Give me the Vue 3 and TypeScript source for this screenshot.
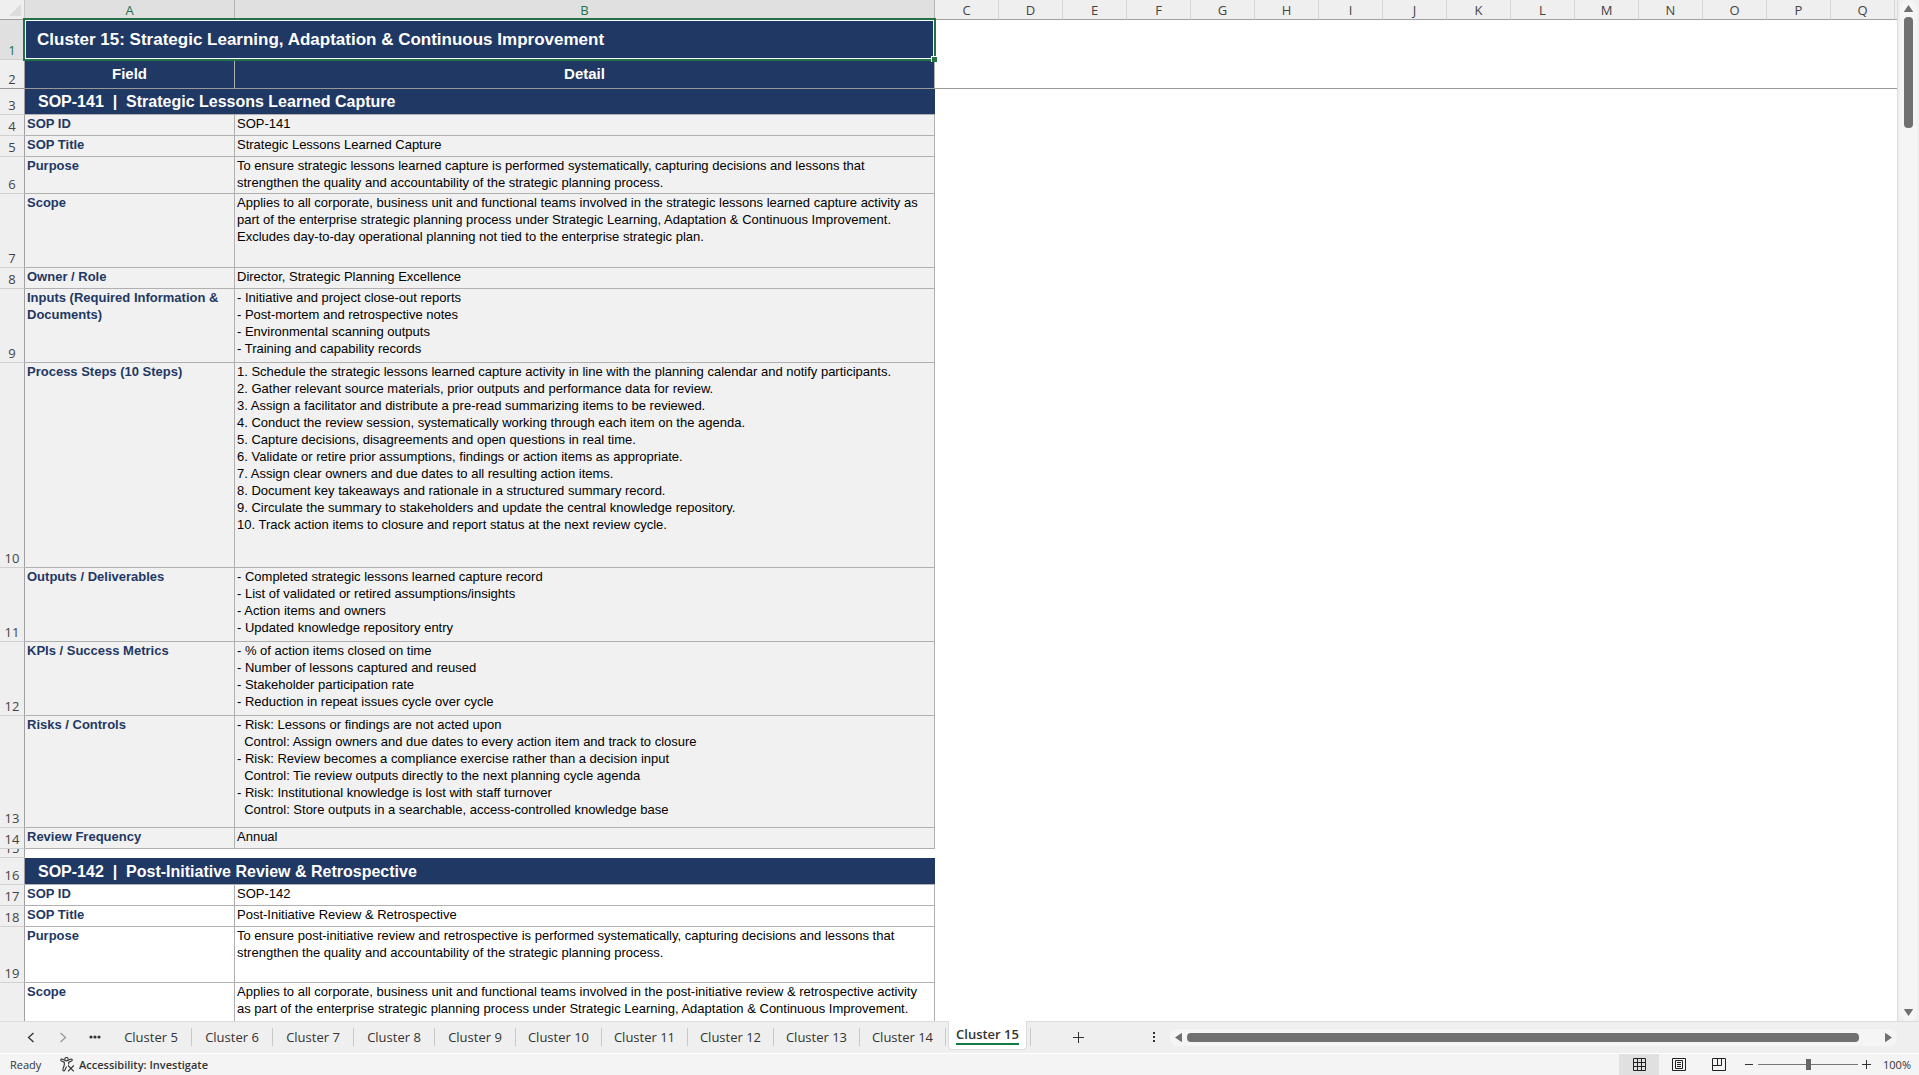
<script setup lang="ts">
interface SheetRow {
  n: number
  h: number
  kind: 'title' | 'head' | 'section' | 'data' | 'blank'
  label?: string
  text?: string
  shaded?: boolean
}

const emptyColumns: string[] = 'CDEFGHIJKLMNOPQ'.split('')

const rows: SheetRow[] = [
  { n: 1, h: 40, kind: 'title', text: 'Cluster 15: Strategic Learning, Adaptation & Continuous Improvement' },
  { n: 2, h: 29, kind: 'head', label: 'Field', text: 'Detail' },
  { n: 3, h: 26, kind: 'section', text: 'SOP-141  |  Strategic Lessons Learned Capture' },
  { n: 4, h: 21, kind: 'data', shaded: true, label: 'SOP ID', text: 'SOP-141' },
  { n: 5, h: 21, kind: 'data', shaded: true, label: 'SOP Title', text: 'Strategic Lessons Learned Capture' },
  {
    n: 6, h: 37, kind: 'data', shaded: true, label: 'Purpose',
    text: 'To ensure strategic lessons learned capture is performed systematically, capturing decisions and lessons that\nstrengthen the quality and accountability of the strategic planning process.',
  },
  {
    n: 7, h: 74, kind: 'data', shaded: true, label: 'Scope',
    text: 'Applies to all corporate, business unit and functional teams involved in the strategic lessons learned capture activity as\npart of the enterprise strategic planning process under Strategic Learning, Adaptation & Continuous Improvement.\nExcludes day-to-day operational planning not tied to the enterprise strategic plan.',
  },
  { n: 8, h: 21, kind: 'data', shaded: true, label: 'Owner / Role', text: 'Director, Strategic Planning Excellence' },
  {
    n: 9, h: 74, kind: 'data', shaded: true, label: 'Inputs (Required Information &\nDocuments)',
    text: '- Initiative and project close-out reports\n- Post-mortem and retrospective notes\n- Environmental scanning outputs\n- Training and capability records',
  },
  {
    n: 10, h: 205, kind: 'data', shaded: true, label: 'Process Steps (10 Steps)',
    text: [
      '1. Schedule the strategic lessons learned capture activity in line with the planning calendar and notify participants.',
      '2. Gather relevant source materials, prior outputs and performance data for review.',
      '3. Assign a facilitator and distribute a pre-read summarizing items to be reviewed.',
      '4. Conduct the review session, systematically working through each item on the agenda.',
      '5. Capture decisions, disagreements and open questions in real time.',
      '6. Validate or retire prior assumptions, findings or action items as appropriate.',
      '7. Assign clear owners and due dates to all resulting action items.',
      '8. Document key takeaways and rationale in a structured summary record.',
      '9. Circulate the summary to stakeholders and update the central knowledge repository.',
      '10. Track action items to closure and report status at the next review cycle.',
    ].join('\n'),
  },
  {
    n: 11, h: 74, kind: 'data', shaded: true, label: 'Outputs / Deliverables',
    text: '- Completed strategic lessons learned capture record\n- List of validated or retired assumptions/insights\n- Action items and owners\n- Updated knowledge repository entry',
  },
  {
    n: 12, h: 74, kind: 'data', shaded: true, label: 'KPIs / Success Metrics',
    text: '- % of action items closed on time\n- Number of lessons captured and reused\n- Stakeholder participation rate\n- Reduction in repeat issues cycle over cycle',
  },
  {
    n: 13, h: 112, kind: 'data', shaded: true, label: 'Risks / Controls',
    text: '- Risk: Lessons or findings are not acted upon\n  Control: Assign owners and due dates to every action item and track to closure\n- Risk: Review becomes a compliance exercise rather than a decision input\n  Control: Tie review outputs directly to the next planning cycle agenda\n- Risk: Institutional knowledge is lost with staff turnover\n  Control: Store outputs in a searchable, access-controlled knowledge base',
  },
  { n: 14, h: 21, kind: 'data', shaded: true, label: 'Review Frequency', text: 'Annual' },
  { n: 15, h: 9, kind: 'blank' },
  { n: 16, h: 27, kind: 'section', text: 'SOP-142  |  Post-Initiative Review & Retrospective' },
  { n: 17, h: 21, kind: 'data', label: 'SOP ID', text: 'SOP-142' },
  { n: 18, h: 21, kind: 'data', label: 'SOP Title', text: 'Post-Initiative Review & Retrospective' },
  {
    n: 19, h: 56, kind: 'data', label: 'Purpose',
    text: 'To ensure post-initiative review and retrospective is performed systematically, capturing decisions and lessons that\nstrengthen the quality and accountability of the strategic planning process.',
  },
  {
    n: 20, h: 74, kind: 'data', label: 'Scope',
    text: 'Applies to all corporate, business unit and functional teams involved in the post-initiative review & retrospective activity\nas part of the enterprise strategic planning process under Strategic Learning, Adaptation & Continuous Improvement.\nExcludes day-to-day operational planning not tied to the enterprise strategic plan.',
  },
]

const tabs: number[] = [5, 6, 7, 8, 9, 10, 11, 12, 13, 14]
</script>

<template>
  <div class="app">
    <main class="workspace">
      <div class="sheet">
        <table>
          <colgroup>
            <col class="c-num"><col class="c-a"><col class="c-b">
            <col v-for="c in emptyColumns" :key="c" class="c-std">
            <col>
          </colgroup>
          <thead>
            <tr>
              <th class="corner" aria-label="Select all"><svg width="12" height="12" viewBox="0 0 12 12"><path d="M12 0V12H0Z" fill="#dcdcdc" /></svg></th>
              <th class="col sel" scope="col">A</th>
              <th class="col sel" scope="col">B</th>
              <th v-for="c in emptyColumns" :key="c" class="col" scope="col">{{ c }}</th>
              <th class="col last"></th>
            </tr>
          </thead>
          <tbody>
            <tr v-for="r in rows" :key="r.n" :class="[r.kind, { shaded: r.shaded }]">
              <th class="num" scope="row"><div :style="{ height: r.h - 1 + 'px' }">{{ r.n }}</div></th>
              <template v-if="r.kind === 'data' || r.kind === 'head'">
                <td class="field">{{ r.label }}</td>
                <td class="detail">{{ r.text }}</td>
              </template>
              <td v-else class="merged" colspan="2">{{ r.text }}<span v-if="r.kind === 'title'" class="selection"><i></i></span></td>
              <td class="empty" colspan="16"></td>
            </tr>
          </tbody>
        </table>
      </div>
      <div class="vscroll">
        <div class="vtrack">
          <button aria-label="Scroll up"><svg width="9" height="7" viewBox="0 0 9 7"><path d="M4.5 0 9 6.500Q9 7 8.500 7H.5Q0 7 0 6.500Z" /></svg></button>
          <div class="vrail"><div class="vthumb"></div></div>
          <button aria-label="Scroll down"><svg width="9" height="7" viewBox="0 0 9 7"><path d="M4.500 7 0 .5Q0 0 .5 0H8.500Q9 0 9 .5Z" /></svg></button>
        </div>
      </div>
    </main>

    <nav class="tabbar">
      <div class="tabnav">
        <button aria-label="Previous sheet"><svg width="8" height="11" viewBox="0 0 8 11"><path d="M6.500 1 1.500 5.500 6.500 10" fill="none" stroke="#333" stroke-width="1.300" /></svg></button>
        <button aria-label="Next sheet"><svg width="8" height="11" viewBox="0 0 8 11"><path d="M1.500 1 6.500 5.500 1.500 10" fill="none" stroke="#9a9a9a" stroke-width="1.300" /></svg></button>
        <button aria-label="More sheets"><svg width="12" height="4" viewBox="0 0 12 4"><g fill="#333"><circle cx="2" cy="2" r="1.600" /><circle cx="6" cy="2" r="1.600" /><circle cx="10" cy="2" r="1.600" /></g></svg></button>
      </div>
      <button v-for="t in tabs" :key="t" class="tab" :class="{ wide: t > 9 }">Cluster {{ t }}</button>
      <button class="tab active"><span>Cluster 15</span></button>
      <div class="sep"></div>
      <button class="add" aria-label="New sheet"><svg width="11" height="11" viewBox="0 0 11 11"><path d="M5.500 0V11M0 5.500H11" stroke="#333" /></svg></button>
      <button class="dots" aria-label="Resize tab area"><svg width="2" height="10" viewBox="0 0 2 10"><path d="M0 0H2V2H0ZM0 4H2V6H0ZM0 8H2V10H0Z" fill="#333" /></svg></button>
      <div class="htrack">
        <button aria-label="Scroll left"><svg width="7" height="9" viewBox="0 0 7 9"><path d="M0 4.500 6.500 0Q7 0 7 .5V8.500Q7 9 6.500 9Z" /></svg></button>
        <div class="hrail"><div class="hthumb"></div></div>
        <button aria-label="Scroll right"><svg width="7" height="9" viewBox="0 0 7 9"><path d="M7 4.500.5 9Q0 9 0 8.500V.5Q0 0 .5 0Z" /></svg></button>
      </div>
    </nav>

    <footer class="status">
      <span class="ready">Ready</span>
      <button class="a11y">
        <svg width="15" height="15" viewBox="0 0 15 15" fill="none" stroke="#333" stroke-width="1.100">
          <circle cx="6.500" cy="2.200" r="1.700" />
          <path d="M4.800 3.200 2 2.100Q.8 1.900.7 3 .7 3.600 1.400 3.900L4.300 5.200V8L2.800 12.600Q2.700 13.900 3.800 14 4.500 14 4.800 13.300L6.500 9.500M8.200 3.200 11 2.100Q12.200 1.900 12.300 3 12.300 3.600 11.600 3.900L8.700 5.200V7.500" />
          <path d="M8 8.500 13.800 14.300M13.800 8.500 8 14.300" />
        </svg>
        <span>Accessibility: Investigate</span>
      </button>
      <div class="views">
        <button class="on" aria-label="Normal view"><svg width="13" height="13" viewBox="0 0 13 13"><path d="M.5 .5H12.500V12.500H.5ZM4.500 0V13M8.500 0V13M0 4.500H13M0 8.500H13" fill="none" stroke="#222" /></svg></button>
        <button aria-label="Page layout view"><svg width="14" height="13" viewBox="0 0 14 13"><path d="M.5 .5H13.500V12.500H.5ZM3.500 2.500H10.500V10.500H3.500ZM5 4.500H9M5 6.500H9M5 8.500H9" fill="none" stroke="#222" /></svg></button>
        <button aria-label="Page break preview"><svg width="14" height="13" viewBox="0 0 14 13"><path d="M.5 .5H13.500V12.500H.5ZM.5 7.500H9.500V.5M5.500 .5V7.500" fill="none" stroke="#222" /></svg></button>
      </div>
      <div class="zoom">
        <button aria-label="Zoom out"><svg width="9" height="9" viewBox="0 0 9 9"><path d="M0 4.500H8" stroke="#333" /></svg></button>
        <input type="range" min="0" max="100" value="50" aria-label="Zoom">
        <button aria-label="Zoom in"><svg width="9" height="9" viewBox="0 0 9 9"><path d="M0 4.500H9M4.500 0V9" stroke="#333" /></svg></button>
      </div>
      <button class="pct">100%</button>
    </footer>
  </div>
</template>

<style>
body {
  overflow: hidden;
  background: #efefef;
}
</style>

<style scoped>
.app {
  display: flex;
  flex-direction: column;
  height: 100vh;
  font-family: "Open Sans", "Noto Sans", sans-serif;
  color: #333;
}
button {
  display: flex;
  align-items: center;
  justify-content: center;
  padding: 0;
  border: 0;
  background: none;
  font: inherit;
  color: inherit;
}
svg {
  display: block;
  flex: none;
}

/* Grid */
.workspace {
  flex: 1;
  display: flex;
  min-height: 0;
}
.sheet {
  flex: 1;
  min-width: 0;
  overflow: hidden;
  background: #fff;
  border-right: 1px solid #dcdcdc;
}
table {
  width: 100%;
  table-layout: fixed;
  border-collapse: separate;
  border-spacing: 0;
}
.c-num { width: 25px; }
.c-a { width: 210px; }
.c-b { width: 700px; }
.c-std { width: 64px; }
th, td {
  box-sizing: border-box;
  padding: 0;
}
thead th {
  height: 20px;
  background: #efefef;
  border-bottom: 1px solid #a0a0a0;
}
.col {
  padding-top: 1px;
  border-right: 1px solid #d4d4d4;
  font-size: 13px;
  line-height: 18px;
  font-weight: 400;
  color: #444;
}
.col.sel {
  background: #e0e0e0;
  border-right-color: #b4b4b4;
  color: #217346;
}
.col.last { border-right: 0; }
.corner {
  border-right: 1px solid #c8c8c8;
}
.corner svg { margin: 1px 0 0 9px; }
.num {
  background: #efefef;
  border-right: 1px solid #a0a0a0;
  border-bottom: 1px solid #d0d0d0;
  font-size: 13px;
  font-weight: 400;
  color: #444;
}
.num div {
  display: flex;
  align-items: flex-end;
  justify-content: center;
  overflow: hidden;
  line-height: 18px;
}
.title .num {
  background: #e0e0e0;
  color: #217346;
}
.head .num, .head td, .head .empty { border-bottom: 1px solid #999; }

td {
  font-family: "Liberation Sans", Arial, sans-serif;
  font-size: 13px;
  line-height: 17px;
  white-space: pre;
  vertical-align: top;
}
.field, .detail {
  padding: 0 2px;
  border-right: 1px solid #b0b0b0;
  border-bottom: 1px solid #b0b0b0;
  color: #000;
}
.field {
  font-weight: 700;
  color: #1f3864;
}
.shaded .field, .shaded .detail { background: #f1f1f1; }
.head .field, .head .detail {
  padding-bottom: 2px;
  background: #203864;
  color: #fff;
  font-size: 15px;
  font-weight: 700;
  text-align: center;
  vertical-align: middle;
}
.section .merged, .title .merged {
  background: #203864;
  color: #fff;
  font-weight: 700;
  vertical-align: middle;
}
.section .merged {
  padding-left: 13px;
  font-size: 16px;
  border-bottom: 1px solid #b0b0b0;
}
.title .merged {
  position: relative;
  padding: 0 0 2px 12px;
  font-size: 17px;
}
.selection {
  position: absolute;
  inset: -2px -1px -1px -2px;
  border: 2px solid #217346;
  box-shadow: inset 0 0 0 1px #fff;
}
.selection i {
  position: absolute;
  right: -3px;
  bottom: -3px;
  width: 5px;
  height: 5px;
  background: #217346;
  border-top: 1px solid #fff;
  border-left: 1px solid #fff;
}

/* Vertical scroll bar */
.vscroll {
  display: flex;
  padding: 0 2px;
  background: #efefef;
}
.vtrack {
  display: flex;
  flex-direction: column;
  align-items: center;
  width: 17px;
  background: #f5f5f5;
  border-radius: 8px;
}
.vtrack button { width: 17px; height: 17px; }
.vtrack svg, .htrack svg { fill: #707070; }
.vrail { flex: 1; }
.vthumb {
  width: 9px;
  height: 11.200%;
  border-radius: 4px;
  background: #707070;
}

/* Sheet tabs */
.tabbar {
  display: flex;
  align-items: center;
  height: 32px;
  padding-right: 22px;
  border-bottom: 1px solid #fff;
  background: #efefef;
  box-shadow: inset 0 1px #dcdcdc;
}
.tabnav {
  display: flex;
  padding-left: 15px;
  width: 96px;
}
.tabnav button { width: 32px; height: 24px; }
.tab {
  width: 81px;
  height: 18px;
  border-right: 1px solid #c8c8c8;
  font-size: 13px;
  line-height: 18px;
  white-space: nowrap;
}
.tab.wide { width: 86px; }
.tab.active {
  align-self: flex-start;
  box-sizing: border-box;
  width: 79px;
  height: 29px;
  margin-left: 2px;
  border: 1px solid #dcdcdc;
  border-top: 0;
  border-radius: 0 0 4px 4px;
  background: #fff;
  font-weight: 600;
}
.tab.active span {
  border-bottom: 2px solid #107c41;
}
.sep {
  width: 3px;
  height: 18px;
  border-right: 1px solid #c8c8c8;
}
.add { width: 32px; height: 24px; margin-left: 31px; }
.dots { width: 20px; height: 24px; margin-left: 50px; }
.htrack {
  flex: 1;
  display: flex;
  align-items: center;
  height: 17px;
  margin-left: 6px;
  border-radius: 8px;
  background: #f5f5f5;
}
.htrack button { width: 17px; height: 17px; }
.hrail { flex: 1; }
.hthumb {
  width: 97%;
  height: 9px;
  border-radius: 4px;
  background: #707070;
}

/* Status bar */
.status {
  display: flex;
  align-items: center;
  height: 21px;
  padding: 0 8px 0 10px;
  background: #f4f4f4;
  font-size: 11px;
  line-height: 20px;
}
.ready { width: 50px; }
.a11y { gap: 4px; font-weight: 600; }
.views {
  display: flex;
  margin-left: auto;
}
.views button { width: 40px; height: 21px; }
.views .on { background: #e0e0e0; }
.zoom {
  display: flex;
  align-items: center;
  gap: 4px;
  margin: 0 12px 0 6px;
}
.zoom input {
  appearance: none;
  width: 100px;
  height: 11px;
  margin: 0;
  background: linear-gradient(#777, #777) center / 100% 1px no-repeat;
}
.zoom input::-webkit-slider-thumb {
  appearance: none;
  width: 5px;
  height: 11px;
  background: #666;
}
</style>
